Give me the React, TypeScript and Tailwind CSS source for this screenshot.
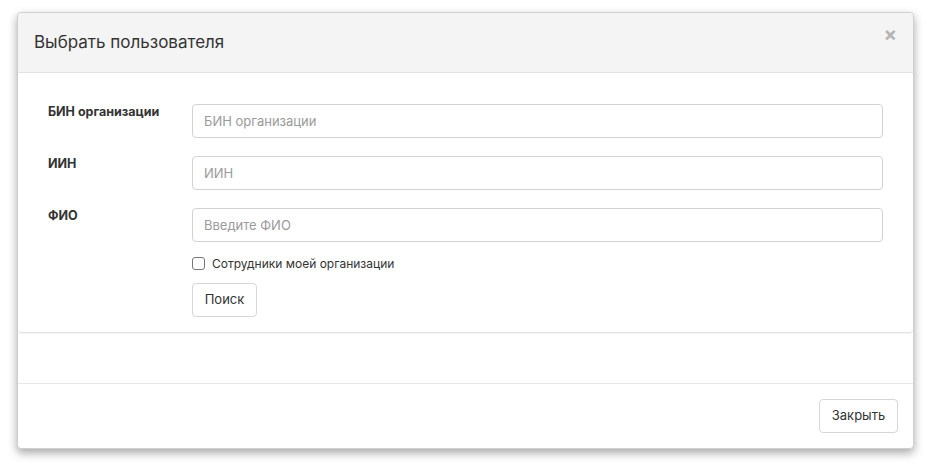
import { useState } from "react";

const fields = [
    { label: 'БИН организации', placeholder: 'БИН организации' },
    { label: 'ИИН', placeholder: 'ИИН' },
    { label: 'ФИО', placeholder: 'Введите ФИО' },
];

const App = () => {
    const [onlyMine, setOnlyMine] = useState<boolean>(false);

    return (
        <div className="min-h-[469px] bg-white pt-[12px] pl-[17px] font-[Inter,sans-serif] text-[#333]">
            <div className="w-[897px] rounded-[4px] border border-[#cfcfcf] bg-white shadow-[0_4px_10px_rgba(0,0,0,0.35)]">
                {/* Header */}
                <div className="flex h-[60px] items-center justify-between rounded-t-[4px] border-b border-[#e3e3e3] bg-[#f4f4f4] pl-[16px] pr-[16px]">
                    <h4 className="text-[17px] leading-none">Выбрать пользователя</h4>
                    <button className="-mt-[18px] text-[20px] font-bold leading-none text-[#b4b4b4]">×</button>
                </div>

                {/* Search card */}
                <div className="rounded-b-[4px] border-b border-[#e3e3e3] px-[30px] pt-[31px] pb-[15px] shadow-[0_1px_1px_rgba(0,0,0,0.05)]">
                    <div className="flex flex-col gap-[18px]">
                        {fields.map((f, idx) => (
                            <div key={idx} className="flex items-start">
                                <label className="w-[144px] shrink-0 text-[12.5px] font-bold leading-[16px]">
                                    {f.label}
                                </label>
                                <input
                                    className="h-[34px] flex-1 rounded-[4px] border border-[#d2d2d2] px-[11px] text-[13px] placeholder:text-[#9a9a9a]"
                                    placeholder={f.placeholder}
                                />
                            </div>
                        ))}
                    </div>
                    <div className="ml-[144px] mt-[14px] flex h-[15px] items-center gap-[7px] text-[12px]">
                        <input
                            type="checkbox"
                            checked={onlyMine}
                            onChange={() => setOnlyMine(!onlyMine)}
                            className="h-[13px] w-[13px] appearance-none rounded-[3px] border border-[#767676] bg-white"
                        />
                        <span>Сотрудники моей организации</span>
                    </div>
                    <button className="ml-[144px] mt-[12px] h-[34px] w-[65px] rounded-[4px] border border-[#d6d6d6] bg-white text-[13px]">
                        Поиск
                    </button>
                </div>

                <div className="h-[51px] border-b border-[#e8e8e8]"></div>

                {/* Footer */}
                <div className="flex justify-end p-[15px]">
                    <button className="h-[34px] w-[79px] rounded-[4px] border border-[#d6d6d6] bg-white text-[13px]">
                        Закрыть
                    </button>
                </div>
            </div>
        </div>
    );
};

export default App;
